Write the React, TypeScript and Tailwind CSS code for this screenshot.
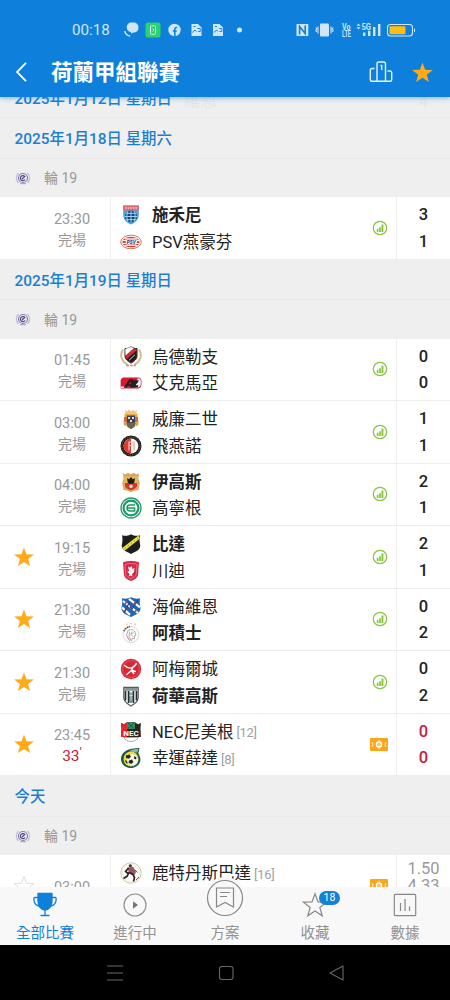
import type { ReactNode } from "react";

type Team = {
  name: string;
  crest: string;
  bold?: boolean;
  rank?: number;
  score: string;
};

type Match = {
  time: string;
  status: string;
  star?: "on" | "off";
  live?: boolean;
  upcoming?: boolean;
  home: Team;
  away: Team;
};

type Day = { date: string; matches: Match[] };

const days: Day[] = [
  {
    date: "2025年1月18日 星期六",
    matches: [
      {
        time: "23:30",
        status: "完場",
        home: { name: "施禾尼", crest: "zwolle", bold: true, score: "3" },
        away: { name: "PSV燕豪芬", crest: "psv", score: "1" },
      },
    ],
  },
  {
    date: "2025年1月19日 星期日",
    matches: [
      {
        time: "01:45",
        status: "完場",
        home: { name: "烏德勒支", crest: "utrecht", score: "0" },
        away: { name: "艾克馬亞", crest: "az", score: "0" },
      },
      {
        time: "03:00",
        status: "完場",
        home: { name: "威廉二世", crest: "willem", score: "1" },
        away: { name: "飛燕諾", crest: "feyenoord", score: "1" },
      },
      {
        time: "04:00",
        status: "完場",
        home: { name: "伊高斯", crest: "eagles", bold: true, score: "2" },
        away: { name: "高寧根", crest: "groningen", score: "1" },
      },
      {
        time: "19:15",
        status: "完場",
        star: "on",
        home: { name: "比達", crest: "breda", bold: true, score: "2" },
        away: { name: "川迪", crest: "twente", score: "1" },
      },
      {
        time: "21:30",
        status: "完場",
        star: "on",
        home: { name: "海倫維恩", crest: "heerenveen", score: "0" },
        away: { name: "阿積士", crest: "ajax", bold: true, score: "2" },
      },
      {
        time: "21:30",
        status: "完場",
        star: "on",
        home: { name: "阿梅爾城", crest: "almere", score: "0" },
        away: { name: "荷華高斯", crest: "heracles", bold: true, score: "2" },
      },
      {
        time: "23:45",
        status: "33",
        star: "on",
        live: true,
        home: { name: "NEC尼美根", crest: "nec", rank: 12, score: "0" },
        away: { name: "幸運薛達", crest: "fortuna", rank: 8, score: "0" },
      },
    ],
  },
  {
    date: "今天",
    matches: [
      {
        time: "03:00",
        status: "",
        star: "off",
        upcoming: true,
        home: { name: "鹿特丹斯巴達", crest: "sparta", rank: 16, score: "1.50" },
        away: { name: "", crest: "", score: "4.33" },
      },
    ],
  },
];

const STAR = "M12 1.6l2.75 7.5 8 .25-6.3 4.9 2.2 7.7L12 17.45l-6.65 4.5 2.2-7.7-6.3-4.9 8-.25z";

// all crests are drawn on a 22x22 grid
const crests: Record<string, ReactNode> = {
  zwolle: (
    <>
      <path d="M3.2 1.5h15.6v9c0 5-3.3 8.2-7.8 10-4.5-1.8-7.8-5-7.8-10z" fill="#4aa9dc" />
      <path d="M3.2 1.5h15.6v5H3.2z" fill="#e06a72" />
      <path d="M5 4h12" stroke="#f5c3c6" strokeWidth="1.4" strokeDasharray="1.6 1" />
      <circle cx="11" cy="12.5" r="6" fill="#1b3f73" />
      <path d="M11 6.5v12M5 12.5h12M6 9.3h10M6 15.7h10M8 7.3c-1.6 3.3-1.6 7 0 10.4M14 7.3c1.6 3.3 1.6 7 0 10.4" fill="none" stroke="#9ad8f5" strokeWidth="1" />
    </>
  ),
  psv: (
    <>
      <ellipse cx="11" cy="11" rx="10.3" ry="6.8" fill="#fff" stroke="#d3764f" strokeWidth="1" />
      <ellipse cx="11" cy="11" rx="8.6" ry="5.2" fill="#da3834" />
      <path d="M5 7.8h12M3 9.6h16M3 12.4h16M5 14.4h12" stroke="#fff" strokeWidth="1" />
      <path d="M5.5 8.5h12l-1.4 5H6.3z" fill="#fff" />
      <text x="11.3" y="12.7" textAnchor="middle" fontSize="4.8" fontWeight="700" fontStyle="italic" fill="#242957">PSV</text>
    </>
  ),
  utrecht: (
    <>
      <path d="M3 3.5C-.8 9 1.4 15.5 8 18.8M19 3.5c3.8 5.5 1.6 12-5 15.3" fill="none" stroke="#d2bd8b" strokeWidth="2" />
      <path d="M5 2.5c2 .2 4-.3 6-1.7 2 1.4 4 1.9 6 1.7v7.3c0 3.2-2.6 5.5-6 7.3-3.4-1.8-6-4.1-6-7.3z" fill="#d12830" stroke="#2b2323" strokeWidth="1" />
      <path d="M5.3 3l5.7-2 2.7 1.3L5.5 9.5z" fill="#fff" />
      <path d="M16.5 4.5v6c-.7 2.6-3 4.7-5.5 6-1.7-.9-3.2-1.9-4.2-3.2z" fill="#1e1a1b" />
      <path d="M9 14.3l6-5.6" stroke="#fff" strokeWidth=".8" />
      <path d="M6 19.5h10" stroke="#df8b88" strokeWidth="1.6" strokeDasharray="3 .8" />
    </>
  ),
  az: (
    <>
      <path d="M4 5.4h14c2.5 0 3.5 2 3.5 4v2.6c0 3-1.6 4.4-4 4.4H.6V9C.6 6.7 2 5.4 4 5.4z" fill="#d81931" />
      <path d="M17.5 6.4h2c1 .8 1.4 2 1.4 3.2v2c0 2.5-1.4 4-3.7 4H15z" fill="#f7f1f1" />
      <path d="M1 14.5h5.5L5.800 16H.6z" fill="#f7f1f1" />
      <path d="M3.500 15.700L9.500 7h3.400l.3 1.200h5.500l-.5 1.700-2.800 3.300h3.100l-.8 2.200h-7.400l-.4-1.500H7.600l-1 1.800z" fill="#252124" />
      <path d="M8.700 12.300l2-2.800.3 2.800z" fill="#d81931" />
    </>
  ),
  willem: (
    <>
      <path d="M5 1.500l2 2 2-2 2 2 2-2 2 2 2-2-.7 4H5.700z" fill="#ecc98a" />
      <path d="M4.500 5.500h13v4h-13z" fill="#efaa3e" />
      <path d="M4 9h14v5H4z" fill="#d5624e" />
      <path d="M7 7.500h8V15H7z" fill="#34426b" />
      <path d="M3.500 12.500l3 2v4l-2.800-1.400zM18.500 12.500l-3 2v4l2.800-1.400z" fill="#e3a53f" />
      <path d="M6 14.500h10L14.500 19 11 21.200 7.500 19z" fill="#6d6548" />
      <path d="M8 9h2v2H8zM12 9h2v2h-2zM10 12h2v2h-2z" fill="#f2dcae" />
    </>
  ),
  feyenoord: (
    <>
      <circle cx="11" cy="11" r="10.500" fill="#221f1c" />
      <circle cx="11" cy="11" r="9" fill="none" stroke="#8f7d51" strokeWidth=".8" strokeDasharray="1 1" />
      <circle cx="11" cy="11" r="7.400" fill="#fff" />
      <path d="M11 3.600a7.400 7.400 0 0 0 0 14.800z" fill="#e13a31" />
      <path d="M9 6.500v9M9 7h4M9 10.500h3.500" stroke="#f7d5cf" strokeWidth="1.100" />
      <path d="M14 6.500v9" stroke="#f3c6be" strokeWidth="2.200" />
    </>
  ),
  eagles: (
    <>
      <path d="M3 2l2.500 1.500L8 1.700l3 1.600 3-1.600 2.500 1.800L19 2l-.6 5.500 1.300 5-1.200 6.500-4.500.8-3 1.400-3-1.400-4.500-.8-1.200-6.500 1.300-5z" fill="#d9a565" />
      <path d="M4.400 5.500h13.200v10.200c-1.400 2.200-3.800 3.400-6.600 4.100-2.800-.7-5.200-1.900-6.600-4.100z" fill="#e4bd53" />
      <path d="M5 12h12v3.500c-1.200 2-3.400 3.200-6 3.800-2.600-.6-4.800-1.800-6-3.800z" fill="#d3382f" />
      <path d="M7 7l2 1.200L11 6l2 2.200L15 7l-.7 4.500-1.500 1.200H9.200L7.700 11.500z" fill="#221a1a" />
      <circle cx="11" cy="15.200" r="1.700" fill="#f5ded4" />
    </>
  ),
  groningen: (
    <>
      <circle cx="11" cy="11" r="10" fill="#fff" stroke="#249866" strokeWidth="1.300" />
      <circle cx="11" cy="11" r="7.400" fill="none" stroke="#179a63" strokeWidth="2.200" />
      <path d="M15 8H10a3 3 0 0 0 0 6h4.600v-3H7.500" fill="none" stroke="#179a63" strokeWidth="1.500" />
    </>
  ),
  breda: (
    <>
      <path d="M2 2.200c3 1.100 5.800.8 9-1 3.200 1.800 6 2.100 9 1-.8 3.500-.5 7 .3 10.400-.3 5-4.700 6-9.300 8.300-4.600-2.300-9-3.300-9.300-8.300C2.500 9.200 2.800 5.700 2 2.200z" fill="#1d1d1b" />
      <path d="M2.200 15L18.500 2.500l1.200 3.200L4.200 18z" fill="#ece13e" />
      <path d="M4.500 15.600L18 5.200" stroke="#8d8630" strokeWidth="1" strokeDasharray="1.600 2.300" />
    </>
  ),
  twente: (
    <>
      <path d="M3 2.200c5-1.500 11-1.500 16 0l-1 12.800c-.6 3-3.700 4.900-7 6-3.300-1.100-6.400-3-7-6z" fill="#d92544" />
      <path d="M5 4.300c4-1 8-1 12 0l-.7 10c-.8 2.400-3 3.600-5.300 4.500-2.300-.9-4.500-2.100-5.300-4.500z" fill="none" stroke="#ed8c99" strokeWidth=".7" />
      <path d="M8 6.500l2 1L12 6l.3 3 2.200-1-.5 4-2 2.200.6 2.600-1.800-1.300-2.200.9.900-2.500-2.300-2.300 1.900-.7z" fill="#fff" />
    </>
  ),
  heerenveen: (
    <>
      <path d="M2 2.200c3.200.9 6.200.3 9-.9 2.800 1.200 5.800 1.800 9 .9-.5 3.300-.3 6.400.6 9.500.2 5-5 7-9.600 9.300C6.400 18.700 1.200 16.700 1.400 11.700 2.300 8.600 2.500 5.500 2 2.200z" fill="#2366b0" />
      <path d="M3 5l15 12M9 2.800l11 8.500M2 11.400l8 7.500" stroke="#fff" strokeWidth="2.200" />
      <path d="M5 6.700l1.400 1M10 10.700l1.600 1.200M15 14.600l1.300 1M14 6.600l1.200 1M4.700 14l1.200 1" stroke="#d43247" strokeWidth="2.100" />
      <path d="M4 17l5-10 3 6 6-9" fill="none" stroke="#204a8b" strokeWidth="1.200" />
    </>
  ),
  ajax: (
    <>
      <path d="M6 2.200l.8-1 .8 1-.8 1zM10.200 1.400l.8-1 .8 1-.8 1zM14.400 2.200l.8-1 .8 1-.8 1z" fill="#dfaa69" />
      <circle cx="11" cy="12.500" r="8" fill="#fff" stroke="#d6c6c7" strokeWidth=".8" />
      <path d="M3.900 9.200A8 8 0 0 1 10 4.600" fill="none" stroke="#5a5656" strokeWidth="1.600" strokeDasharray="1.600 .7" />
      <path d="M8 8.500c3-2.200 7-.6 7.200 2.600l.8 2-1.500.5v2.800l-2.500.4-.3 2M8 8.500L6.500 13l2 4.500M9.500 9.500l-.4 5 2 4M12 9.500l-1 3 2 2M13.500 11l-2 .5" fill="none" stroke="#a5a0a3" strokeWidth=".9" />
      <path d="M7 14.500l3 4.500" stroke="#dc8e99" strokeWidth="1" />
    </>
  ),
  almere: (
    <>
      <circle cx="11" cy="11" r="10.200" fill="#db2434" />
      <circle cx="11" cy="11" r="8.400" fill="none" stroke="#eb7580" strokeWidth=".6" />
      <path d="M4.500 7.500c2.500 2.300 5 3 7.500 2.200 1.800-.7 3.300-2 4.300-4M12.500 9.700l-.8 2.600-4.700 4M11.800 12.200l3.500 1.300M11.500 12.300l2.200 3.200" fill="none" stroke="#fff" strokeWidth="1.500" strokeLinecap="round" />
    </>
  ),
  heracles: (
    <>
      <path d="M3.800 2.300h14.400v10.200c0 4-3.200 6.400-7.200 8.500-4-2.100-7.200-4.500-7.200-8.500z" fill="#fff" stroke="#54595a" strokeWidth="1.200" />
      <path d="M5.500 6v9.500M8.600 6v12M13.400 6v12M16.500 6v9.500" stroke="#282d2e" strokeWidth="1.700" />
      <path d="M4 3h14v2.800H4z" fill="#899495" />
      <path d="M9 7.500h4v9l-2 1.600-2-1.600z" fill="#5f8186" />
      <path d="M11 8v8M9.800 10.500h2.600" stroke="#dfe8e8" strokeWidth=".9" />
    </>
  ),
  nec: (
    <>
      <path d="M1 2l3 1.300L7 1.200h8l3 2.100L21 2l-.5 5 .4 9H1.100l.4-9z" fill="#292526" />
      <path d="M1 2l3 1.300L7 1.200V16H1.100l.4-9z" fill="#df2730" />
      <path d="M7 1.500h8V8H7z" fill="#2f8d64" />
      <path d="M8 2l6 5.500M14 2L8 7.500" stroke="#235a44" strokeWidth="1" />
      <path d="M3.500 16.500h15c-1.500 2.200-4 3.600-7.500 4.200-3.500-.6-6-2-7.500-4.200z" fill="#fff" stroke="#9a9797" strokeWidth=".8" />
      <text x="11" y="15" textAnchor="middle" fontSize="8" fontWeight="700" fill="#fff">NEC</text>
    </>
  ),
  fortuna: (
    <>
      <path d="M19.500 1L18.300 6.500c5.500 8-.8 14.500-7.300 14.500C4.800 21 1 16.800 1 11.800 1 5 8 1 19.500 1z" fill="#1e5943" />
      <circle cx="11" cy="12" r="7.500" fill="#e8dc45" />
      <path d="M9 4.200c3-2 6.500-2.300 9.500-2.200L17 5.800z" fill="#8bb69e" />
      <circle cx="12.500" cy="12.800" r="5.500" fill="#f5f4ec" />
      <path d="M6 8.500l3.400-1 1.600 2-2 2.200-3-.7zM9 13.500l3-1 1.500 2.500-2.300 2-2.700-1.200zM14.500 9l2 1.500-.5 2-2.200-1zM5 13l2 1 .6 2.500L6 16z" fill="#252a24" />
    </>
  ),
  sparta: (
    <>
      <circle cx="11" cy="11" r="10.200" fill="#fff" stroke="#c8c098" strokeWidth=".9" />
      <circle cx="11" cy="11" r="8.400" fill="none" stroke="#e5e0c6" strokeWidth=".7" />
      <circle cx="10.300" cy="3.800" r="1.600" fill="#493637" />
      <path d="M7.500 5.600l5.700-.8 2.800 5.200-1.800 3.500-5.200-2z" fill="#9e5560" />
      <path d="M8.500 6L5.600 9.500l2.500 2M9 10.500l-2 3.800-3.500 2.200M13 12.500l1.500 3-1 4M9.500 10.500l4 2.300" fill="none" stroke="#322225" strokeWidth="1.700" />
      <path d="M14.500 7.500l3 3M16 18l3-3" stroke="#6d5a58" strokeWidth="1" />
    </>
  ),
};

function Crest({ id }: { id: string }) {
  return (
    <svg viewBox="0 0 22 22" className="size-[22px] shrink-0">
      {crests[id]}
    </svg>
  );
}

function Star({ on }: { on: boolean }) {
  return (
    <svg viewBox="0 0 24 24" className="size-[22px]">
      <path d={STAR} fill={on ? "#ffab19" : "none"} stroke={on ? "none" : "#dcdcdc"} strokeWidth="1" />
    </svg>
  );
}

function StatsIcon() {
  return (
    <svg viewBox="0 0 16 16" className="ml-0.5 size-4">
      <circle cx="8" cy="8" r="6.700" fill="none" stroke="#86c440" strokeWidth="1.200" />
      <path d="M4.800 8.800h1.700v3.200H4.800zM7.200 7.300h1.700V12H7.200zM9.500 4.500h1.900V12H9.500z" fill="#86c440" />
    </svg>
  );
}

function PitchIcon() {
  return (
    <svg viewBox="0 0 18 13" className="h-[13px] w-[18px]">
      <rect width="18" height="13" rx="1" fill="#faa61a" />
      <circle cx="9" cy="6.500" r="2.500" fill="none" stroke="#fff" strokeWidth="1.500" />
      <path d="M9 1.800v9.400M1.500 4.800h1.300v3.400H1.500M16.500 4.800h-1.300v3.400h1.300" fill="none" stroke="#ffe9c0" strokeWidth="1" />
    </svg>
  );
}

function LeagueIcon() {
  return (
    <svg viewBox="0 0 16 14" className="h-[14px] w-4" fill="none" stroke="#8480ac">
      <path d="M3.500 2C.8 5 .8 9 3.500 12M12.500 2c2.700 3 2.700 7 0 10" stroke="#c3c0d8" strokeWidth="1.500" />
      <circle cx="8" cy="7" r="4.500" strokeWidth="1.200" />
      <path d="M10 8.500A2.500 2.500 0 1 1 9.800 5.500L7 8" stroke="#4b4780" strokeWidth="1.200" />
      <path d="M5 12.700h6" stroke="#a09cbd" />
    </svg>
  );
}

function DateRow({ date }: { date: string }) {
  return (
    <div className="flex h-[40.5px] shrink-0 items-center border-b border-[#e9e9e9] pl-[14.5px] pt-1 text-[15.4px] font-medium text-[#1a7fd2]">
      {date}
    </div>
  );
}

function TeamLine({ team }: { team: Team }) {
  return (
    <div className="flex h-[26.5px] items-center">
      {team.crest && <Crest id={team.crest} />}
      <span className={team.bold ? "ml-2.5 pt-[3px] text-[16.5px] font-bold text-[#222]" : "ml-2.5 pt-[3px] text-[16.5px] text-[#222]"}>
        {team.name}
      </span>
      {team.rank && <span className="ml-[3px] pt-0.5 text-[13px] tracking-[-0.3px] text-[#a0a0a0]">[{team.rank}]</span>}
    </div>
  );
}

function MatchRow({ match }: { match: Match }) {
  let scoreClass = "font-medium text-[#222]";
  if (match.live) scoreClass = "font-medium text-[#c8203c]";
  if (match.upcoming) scoreClass = "text-[#999]";

  return (
    <div className="flex h-[62.5px] shrink-0 border-b border-[#ededed] bg-white">
      <div className="flex w-[47px] items-center justify-center">
        {match.star && <Star on={match.star === "on"} />}
      </div>
      <div className="flex w-[64px] flex-col items-center justify-center border-r border-[#efefef] pr-[13px] pt-1 leading-[21px] text-[#999]">
        <span className="text-[14.5px]">{match.time}</span>
        {match.live ? (
          <span className="flex text-[15.5px] text-[#c8203c]">
            {match.status}
            <span className="-mt-1 text-[13px]">&#39;</span>
          </span>
        ) : (
          match.status && <span className="text-[14px]">{match.status}</span>
        )}
      </div>
      <div className="flex-1 whitespace-nowrap pl-[9px] pt-[5px]">
        <TeamLine team={match.home} />
        <TeamLine team={match.away} />
      </div>
      <div className="flex w-[35px] items-center justify-center">
        {match.live || match.upcoming ? <PitchIcon /> : <StatsIcon />}
      </div>
      <div
        className={`w-[54px] border-l border-[#efefef] text-center text-[16.5px] ${
          match.upcoming ? "pt-[5px] leading-[17px]" : "pt-[5px] leading-[26.5px]"
        } ${scoreClass}`}
      >
        <div>{match.home.score}</div>
        <div>{match.away.score}</div>
      </div>
    </div>
  );
}

function StatusBar() {
  return (
    <div className="flex h-[60px] items-center pl-[72px] pr-[33px] text-[#cfe6fb]">
      <span className="w-[52px] pt-px text-[15.2px]">00:18</span>
      <svg viewBox="0 0 120 18" className="h-[18px] w-[120px]" fill="currentColor">
        <path d="M7.500 1.500h2c3 0 5 2 5 5s-2 5-5 5l-2.500 1.200.2-1.500C4 10.500 2.700 8.800 2.700 6.500c0-3 2-5 4.800-5z" />
        <path d="M.8 10c.4 2.700 2.500 4.700 5.400 5" fill="none" stroke="currentColor" strokeWidth="1.600" />
        <rect x="21.500" y="1.500" width="15" height="15" rx="2.500" fill="#2bd36d" />
        <rect x="26.500" y="4.800" width="5" height="8.500" rx=".7" fill="none" stroke="currentColor" />
        <path d="M28.500 7.500l1.500 1.500-1.500 1.500" fill="none" stroke="currentColor" />
        <circle cx="50.500" cy="9" r="6.200" />
        <path d="M50.800 15.500V8.500c0-1.500.7-2.100 2.300-2M48.800 10h4" fill="none" stroke="#0e80dc" strokeWidth="1.600" />
        {[67.5, 89].map((x) => (
          <g key={x} transform={`translate(${x} 3)`}>
            <path d="M0 0h6.500l3.500 3.500V12H0z" />
            <path d="M.8 8.500L3.500 6 5 7.500M2 2.500h2" fill="none" stroke="#0e80dc" strokeWidth="1" />
            <path d="M5.800 4.500h3v3H6.500" fill="none" stroke="#0e80dc" strokeWidth=".9" />
          </g>
        ))}
        <circle cx="115.500" cy="9" r="2.500" />
      </svg>
      <svg viewBox="0 0 122 18" className="ml-auto h-[18px] w-[122px]" fill="currentColor">
        <path d="M1.500 3h11.800v12H1.500z" />
        <path d="M4.600 13.500V5.500l5.600 7V4.500" fill="none" stroke="#0e80dc" strokeWidth="1.600" />
        <rect x="25" y="2.500" width="9" height="13" rx="1.200" />
        <path d="M23 5.500v7M20.800 6.500l1 1.500-1 1.500 1 1.500M36 5.500v7M38.200 6.500l-1 1.500 1 1.500-1 1.500" fill="none" stroke="currentColor" strokeWidth="1.100" />
        <text x="47" y="8.700" fontSize="8.500" fontWeight="700" textLength="8.500" lengthAdjust="spacingAndGlyphs">Vo</text>
        <text x="47" y="15.600" fontSize="8.500" fontWeight="700" textLength="9" lengthAdjust="spacingAndGlyphs">LTE</text>
        <path d="M61.500 4.800L63.500 2.500l2 2.300zM61.500 6.200l2 2.300 2-2.300z" />
        <text x="66.500" y="8.500" fontSize="8.500" fontWeight="700" textLength="9.500" lengthAdjust="spacingAndGlyphs">5G</text>
        <path d="M68 11.500h2.400V15H68zM73 9.800h2.400V15H73zM78 6h2.400v9H78zM83 3h2.400v12H83z" />
        <rect x="92.500" y="3.500" width="25" height="11.500" rx="3" fill="none" stroke="currentColor" strokeWidth="1.100" />
        <rect x="94.500" y="5.300" width="16" height="8" rx="1.300" fill="#ffbd18" />
        <path d="M119 7c1.600.8 1.600 3.500 0 4.300z" />
      </svg>
    </div>
  );
}

function Header() {
  return (
    <header className="relative z-10 h-[97px] shrink-0 bg-[#0e80dc] shadow-[0_1px_5px_rgba(14,128,220,0.55)]">
      <StatusBar />
      <div className="flex h-6 items-center pl-[15px] pr-4">
        <svg viewBox="0 0 12 20" className="h-5 w-3" fill="none" stroke="#fff" strokeWidth="1.800">
          <path d="M11 .8L2 10l9 9.200" />
        </svg>
        <h1 className="ml-6 flex-1 pt-px text-[21.5px] font-bold leading-6 text-white">荷蘭甲組聯賽</h1>
        <svg viewBox="0 0 24 22" className="h-[22px] w-6" fill="none" stroke="#e5f3ff" strokeWidth="1.400" strokeLinejoin="round">
          <path d="M5.500 7.500H3c-1.200 0-1.700.5-1.700 1.700v9.600c0 1 .5 1.500 1.500 1.500h18.400c1 0 1.500-.5 1.500-1.500v-7c0-1.200-.5-1.800-1.700-1.800h-2.500" />
          <path d="M8 20.300V2.800C8 1.600 8.500 1 9.700 1h5c1.200 0 1.800.6 1.800 1.800v17.500M11.500 4.500h1.200V9" />
        </svg>
        <svg viewBox="0 0 24 24" className="ml-[18px] size-[23px]">
          <path d={STAR} fill="#ffab19" />
        </svg>
      </div>
    </header>
  );
}

function NavItem({ label, active, children }: { label: string; active?: boolean; children: ReactNode }) {
  return (
    <div className={`flex w-[90px] flex-col items-center pt-1 ${active ? "text-[#0e80dc]" : "text-[#929292]"}`}>
      <div className="relative flex h-[27px] w-full items-center justify-center">{children}</div>
      <span className="mt-[5.5px] text-[14.5px] leading-[20px]">{label}</span>
    </div>
  );
}

function BottomNav() {
  return (
    <nav className="relative z-10 flex h-[58px] shrink-0 bg-[#f8f8f8]">
      <NavItem label="全部比賽" active>
        <svg viewBox="0 0 24 25" className="h-[25px] w-6" fill="none" stroke="currentColor" strokeWidth="1.300">
          <path d="M5 1.500h14V9c0 5-3 9-7 9s-7-4-7-9z" fill="currentColor" />
          <path d="M5 5.500H1.800c-1 0-1 1-.9 2.500.3 3 1.800 5.500 5.300 6M19 5.500h3.200c1 0 1 1 .9 2.500-.3 3-1.800 5.500-5.300 6M12 18v5M7.500 23.500h9" />
        </svg>
      </NavItem>
      <NavItem label="進行中">
        <svg viewBox="0 0 24 24" className="size-6" fill="none" stroke="currentColor" strokeWidth="1.200">
          <circle cx="12" cy="12" r="11" />
          <path d="M10 8.200l5 3.800-5 3.800z" fill="#777" stroke="none" />
        </svg>
      </NavItem>
      <NavItem label="方案">
        {/* raised button sticks out of the top of the bar */}
        <div className="absolute -top-[14px] flex size-[42px] items-center justify-center rounded-full bg-[#f8f8f8]">
          <svg viewBox="0 0 38 38" className="size-[38px]" fill="none" stroke="#888" strokeWidth="1.200">
            <circle cx="19" cy="19" r="17.500" />
            <path d="M10.500 9h17v19L19 23.500 10.500 28zM14 13.500h10M14 17.500h7" />
          </svg>
        </div>
      </NavItem>
      <NavItem label="收藏">
        <svg viewBox="0 0 24 24" className="size-[26px]" fill="none" stroke="#888" strokeWidth="1.100">
          <path d={STAR} />
        </svg>
        <span className="absolute left-[49px] top-0 flex h-[14px] w-[21px] items-center justify-center rounded-full bg-[#1580da] text-[10.5px] text-white">
          18
        </span>
      </NavItem>
      <NavItem label="數據">
        <svg viewBox="0 0 24 24" className="size-6" fill="none" stroke="#888" strokeWidth="1.200">
          <rect x="1.300" y="1.300" width="21.400" height="21.400" rx="1" />
          <path d="M7.500 10v8M12 6v12M16.500 13.500V18" />
        </svg>
      </NavItem>
    </nav>
  );
}

function SystemNav() {
  return (
    <div className="flex h-[55px] shrink-0 items-center bg-black pl-[106px] pr-[105px]">
      <svg viewBox="0 0 239 18" className="h-[18px] w-[239px]" fill="none" stroke="#686868" strokeWidth="1.100">
        <path d="M1 2h16M1 9h16M1 16h16" />
        <rect x="113.500" y="2.500" width="13.500" height="13" rx="2.500" />
        <path d="M224 9l13-7v14z" strokeLinejoin="round" />
      </svg>
    </div>
  );
}

export default function App() {
  return (
    <div className="flex h-[1000px] w-[450px] flex-col overflow-hidden bg-[#efefef] font-['Roboto','Noto_Sans_CJK_TC',sans-serif]">
      <Header />
      <main className="flex h-[790px] shrink-0 flex-col overflow-hidden">
        {/* previous day, mostly scrolled under the header */}
        <div className="relative -mt-[19.5px] shrink-0">
          <DateRow date="2025年1月12日 星期日" />
          <div className="absolute inset-x-0 top-[13px] flex justify-between pl-[184px] pr-[22px] text-[16.5px] leading-[22px] text-[#e6e6e6]">
            <span>維恩</span>
            <span>4</span>
          </div>
        </div>
        {days.map((day) => (
          <section key={day.date} className="flex shrink-0 flex-col">
            <DateRow date={day.date} />
            <div className="flex h-[38.5px] shrink-0 items-center pl-[15px] text-[14px] text-[#999]">
              <LeagueIcon />
              <span className="ml-[13px] pt-0.5">輪 19</span>
            </div>
            {day.matches.map((match) => (
              <MatchRow key={match.home.name} match={match} />
            ))}
          </section>
        ))}
      </main>
      <BottomNav />
      <SystemNav />
    </div>
  );
}
